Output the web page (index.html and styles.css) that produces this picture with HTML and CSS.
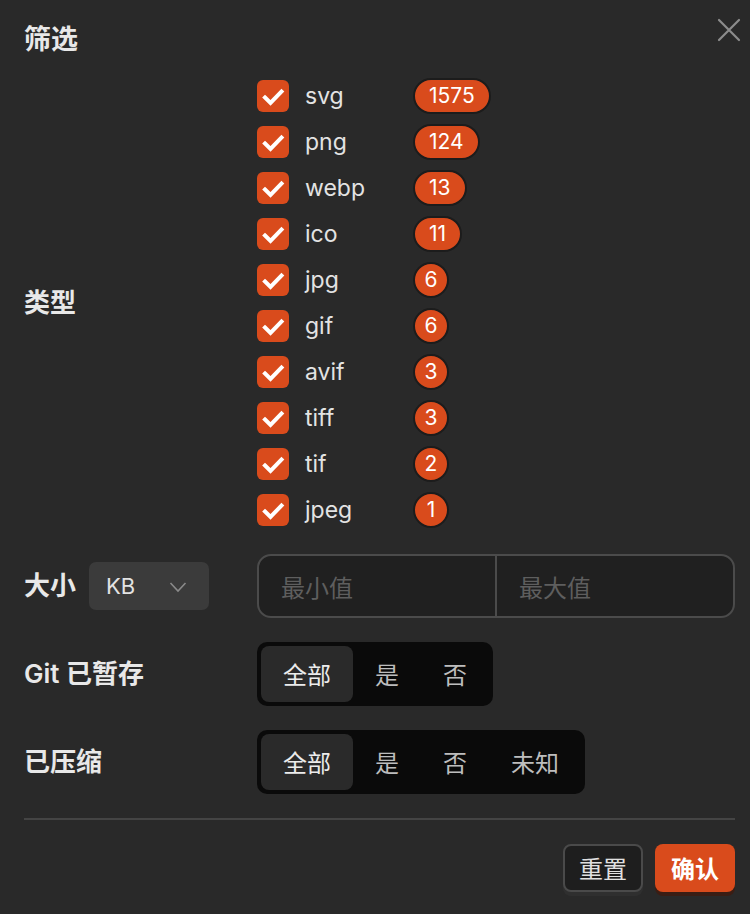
FILE: index.html
```html
<!DOCTYPE html>
<html lang="zh-CN">
<head>
<meta charset="utf-8">
<title>筛选</title>
<link rel="stylesheet" href="styles.css">
</head>
<body>
<div class="dialog">
  <button class="close" aria-label="关闭">
    <svg width="24" height="24" viewBox="0 0 24 24"><path d="M2 2 L22 22 M22 2 L2 22" stroke="#8c8c8c" stroke-width="2.2" stroke-linecap="round" fill="none"/></svg>
  </button>
  <h2 class="title">筛选</h2>

  <div class="form">
    <div class="row row-types">
      <div class="label">类型</div>
      <ul class="types">
        <li class="type"><span class="check"><svg viewBox="0 0 32 32"><path d="M8 17.5 L13.5 23 L24.5 11.5"/></svg></span><span class="name">svg</span><span class="badge multi">1575</span></li>
        <li class="type"><span class="check"><svg viewBox="0 0 32 32"><path d="M8 17.5 L13.5 23 L24.5 11.5"/></svg></span><span class="name">png</span><span class="badge multi">124</span></li>
        <li class="type"><span class="check"><svg viewBox="0 0 32 32"><path d="M8 17.5 L13.5 23 L24.5 11.5"/></svg></span><span class="name">webp</span><span class="badge multi">13</span></li>
        <li class="type"><span class="check"><svg viewBox="0 0 32 32"><path d="M8 17.5 L13.5 23 L24.5 11.5"/></svg></span><span class="name">ico</span><span class="badge multi">11</span></li>
        <li class="type"><span class="check"><svg viewBox="0 0 32 32"><path d="M8 17.5 L13.5 23 L24.5 11.5"/></svg></span><span class="name">jpg</span><span class="badge">6</span></li>
        <li class="type"><span class="check"><svg viewBox="0 0 32 32"><path d="M8 17.5 L13.5 23 L24.5 11.5"/></svg></span><span class="name">gif</span><span class="badge">6</span></li>
        <li class="type"><span class="check"><svg viewBox="0 0 32 32"><path d="M8 17.5 L13.5 23 L24.5 11.5"/></svg></span><span class="name">avif</span><span class="badge">3</span></li>
        <li class="type"><span class="check"><svg viewBox="0 0 32 32"><path d="M8 17.5 L13.5 23 L24.5 11.5"/></svg></span><span class="name">tiff</span><span class="badge">3</span></li>
        <li class="type"><span class="check"><svg viewBox="0 0 32 32"><path d="M8 17.5 L13.5 23 L24.5 11.5"/></svg></span><span class="name">tif</span><span class="badge">2</span></li>
        <li class="type"><span class="check"><svg viewBox="0 0 32 32"><path d="M8 17.5 L13.5 23 L24.5 11.5"/></svg></span><span class="name">jpeg</span><span class="badge">1</span></li>
      </ul>
    </div>

    <div class="row">
      <div class="label label-size">
        <span>大小</span>
        <div class="select">
          <span class="select-value">KB</span>
          <svg class="chevron" width="18" height="12" viewBox="0 0 18 12"><polyline points="1.5,2 9,10 16.5,2" fill="none" stroke="#8a8a8a" stroke-width="1.6"/></svg>
        </div>
      </div>
      <div class="range">
        <input class="range-input" placeholder="最小值">
        <span class="range-sep"></span>
        <input class="range-input" placeholder="最大值">
      </div>
    </div>

    <div class="row">
      <div class="label">Git 已暂存</div>
      <div class="seg-wrap">
        <div class="segmented">
          <span class="seg-item active">全部</span>
          <span class="seg-item">是</span>
          <span class="seg-item">否</span>
        </div>
      </div>
    </div>

    <div class="row">
      <div class="label">已压缩</div>
      <div class="seg-wrap">
        <div class="segmented">
          <span class="seg-item active">全部</span>
          <span class="seg-item">是</span>
          <span class="seg-item">否</span>
          <span class="seg-item">未知</span>
        </div>
      </div>
    </div>
  </div>

  <div class="divider"></div>

  <div class="footer">
    <button class="btn btn-default">重置</button>
    <button class="btn btn-primary">确认</button>
  </div>
</div>
</body>
</html>
```

FILE: styles.css
```css
* {
  box-sizing: border-box;
}

html, body {
  margin: 0;
  padding: 0;
  background: #292929;
}

body {
  font-family: "Inter", "Noto Sans CJK SC", sans-serif;
  color: #e6e6e6;
}

.dialog {
  position: relative;
  width: 750px;
  height: 914px;
  padding: 20px 15px 0 24px;
}

.close {
  position: absolute;
  top: 18px;
  right: 9px;
  width: 24px;
  height: 24px;
  padding: 0;
  border: 0;
  background: transparent;
  display: flex;
}

.title {
  margin: 0 0 22px;
  font-size: 27px;
  line-height: 36px;
  font-weight: 600;
  color: #e8e8e8;
  font-family: "Noto Sans CJK SC", sans-serif;
}

.form {
  display: flex;
  flex-direction: column;
  gap: 24px;
}

.row {
  display: grid;
  grid-template-columns: 233px 1fr;
  align-items: center;
}

.row-types {
  margin-bottom: 2px;
}

.label {
  font-size: 26px;
  font-weight: 600;
  color: #e8e8e8;
  line-height: 36px;
  font-family: "Inter", "Noto Sans CJK SC", sans-serif;
}

.label-size {
  display: flex;
  align-items: center;
  gap: 13px;
}

/* type list */
.types {
  list-style: none;
  margin: 0;
  padding: 0;
  display: flex;
  flex-direction: column;
  gap: 10px;
}

.type {
  display: flex;
  align-items: center;
  height: 36px;
}

.check {
  flex: none;
  width: 32px;
  height: 32px;
  border-radius: 6px;
  background: #d94b1c;
  display: flex;
  margin-right: 16px;
}

.check svg {
  width: 32px;
  height: 32px;
}

.check path {
  fill: none;
  stroke: #ffffff;
  stroke-width: 4;
  stroke-linecap: square;
  stroke-linejoin: miter;
}

.name {
  flex: none;
  width: 108px;
  font-size: 23px;
  color: #e3e3e3;
  line-height: 32px;
}

.badge {
  flex: none;
  height: 36px;
  min-width: 36px;
  border: 2px solid #1c1c1c;
  border-radius: 18px;
  background: #d94b1c;
  color: #ffffff;
  font-size: 21px;
  line-height: 32px;
  text-align: center;
  padding: 0;
}

.badge.multi {
  padding: 0 14px;
}

/* size */
.select {
  width: 120px;
  height: 48px;
  border-radius: 7px;
  background: #3b3b3b;
  display: flex;
  align-items: center;
  justify-content: space-between;
  padding: 0 22px 0 17px;
}

.select-value {
  font-size: 22px;
  font-weight: 400;
  color: #e3e3e3;
}

.chevron {
  margin-top: 2px;
}

.range {
  display: flex;
  align-items: stretch;
  height: 64px;
  border: 2px solid #4b4b4b;
  border-radius: 14px;
  background: #202020;
  overflow: hidden;
}

.range-input {
  flex: 1;
  min-width: 0;
  border: 0;
  outline: none;
  background: transparent;
  padding: 0 22px;
  font-family: "Noto Sans CJK SC", sans-serif;
  font-size: 24px;
  color: #e0e0e0;
}

.range-input::placeholder {
  color: #5e5e5e;
}

.range-sep {
  width: 2px;
  background: #4b4b4b;
}

/* segmented */
.seg-wrap {
  display: flex;
}

.segmented {
  display: flex;
  padding: 4px;
  background: #0a0a0a;
  border-radius: 10px;
}

.seg-item {
  height: 56px;
  line-height: 56px;
  padding: 0 22px;
  font-size: 24px;
  color: #bdbdbd;
  border-radius: 8px;
  font-family: "Noto Sans CJK SC", sans-serif;
}

.seg-item.active {
  background: #2a2a2a;
  color: #ececec;
}

/* footer */
.divider {
  height: 2px;
  background: #444444;
  margin: 24px 0 24px;
}

.footer {
  display: flex;
  justify-content: flex-end;
  gap: 12px;
}

.btn {
  width: 80px;
  height: 48px;
  border-radius: 8px;
  font-family: "Noto Sans CJK SC", sans-serif;
  font-size: 24px;
  line-height: 1;
  padding: 0;
  cursor: pointer;
}

.btn-default {
  background: #1e1e1e;
  border: 2px solid #4a4a4a;
  color: #e0e0e0;
  box-shadow: 0 4px 0 rgba(255, 255, 255, 0.03);
}

.btn-primary {
  background: #d94b1c;
  border: 0;
  color: #ffffff;
  font-weight: 600;
  box-shadow: 0 4px 0 #3a1d14;
}
```
